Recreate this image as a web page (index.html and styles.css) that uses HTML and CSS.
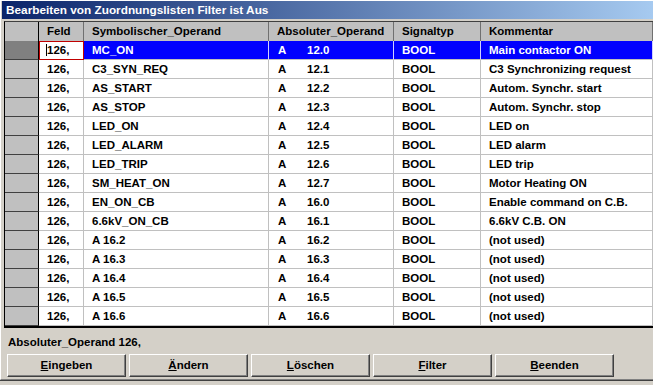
FILE: index.html
```html
<!DOCTYPE html>
<html>
<head>
<meta charset="utf-8">
<link rel="stylesheet" href="styles.css">
</head>
<body>
<div class="window">
  <div class="title">Bearbeiten von Zuordnungslisten Filter ist Aus</div>
  <div class="grid">
    <div class="row head">
      <div class="ind"></div>
      <div class="c">Feld</div>
      <div class="c">Symbolischer_Operand</div>
      <div class="c">Absoluter_Operand</div>
      <div class="c">Signaltyp</div>
      <div class="c">Kommentar</div>
    </div>
    <div class="row sel">
      <div class="ind"></div>
      <div class="c feld"><span class="caret"></span>126,</div>
      <div class="c">MC_ON</div>
      <div class="c"><span class="a">A</span>12.0</div>
      <div class="c">BOOL</div>
      <div class="c">Main contactor ON</div>
    </div>
    <div class="row"><div class="ind"></div><div class="c">126,</div><div class="c">C3_SYN_REQ</div><div class="c"><span class="a">A</span>12.1</div><div class="c">BOOL</div><div class="c">C3 Synchronizing request</div></div>
    <div class="row"><div class="ind"></div><div class="c">126,</div><div class="c">AS_START</div><div class="c"><span class="a">A</span>12.2</div><div class="c">BOOL</div><div class="c">Autom. Synchr. start</div></div>
    <div class="row"><div class="ind"></div><div class="c">126,</div><div class="c">AS_STOP</div><div class="c"><span class="a">A</span>12.3</div><div class="c">BOOL</div><div class="c">Autom. Synchr. stop</div></div>
    <div class="row"><div class="ind"></div><div class="c">126,</div><div class="c">LED_ON</div><div class="c"><span class="a">A</span>12.4</div><div class="c">BOOL</div><div class="c">LED on</div></div>
    <div class="row"><div class="ind"></div><div class="c">126,</div><div class="c">LED_ALARM</div><div class="c"><span class="a">A</span>12.5</div><div class="c">BOOL</div><div class="c">LED alarm</div></div>
    <div class="row"><div class="ind"></div><div class="c">126,</div><div class="c">LED_TRIP</div><div class="c"><span class="a">A</span>12.6</div><div class="c">BOOL</div><div class="c">LED trip</div></div>
    <div class="row"><div class="ind"></div><div class="c">126,</div><div class="c">SM_HEAT_ON</div><div class="c"><span class="a">A</span>12.7</div><div class="c">BOOL</div><div class="c">Motor Heating ON</div></div>
    <div class="row"><div class="ind"></div><div class="c">126,</div><div class="c">EN_ON_CB</div><div class="c"><span class="a">A</span>16.0</div><div class="c">BOOL</div><div class="c">Enable command on C.B.</div></div>
    <div class="row"><div class="ind"></div><div class="c">126,</div><div class="c">6.6kV_ON_CB</div><div class="c"><span class="a">A</span>16.1</div><div class="c">BOOL</div><div class="c">6.6kV C.B. ON</div></div>
    <div class="row"><div class="ind"></div><div class="c">126,</div><div class="c">A 16.2</div><div class="c"><span class="a">A</span>16.2</div><div class="c">BOOL</div><div class="c">(not used)</div></div>
    <div class="row"><div class="ind"></div><div class="c">126,</div><div class="c">A 16.3</div><div class="c"><span class="a">A</span>16.3</div><div class="c">BOOL</div><div class="c">(not used)</div></div>
    <div class="row"><div class="ind"></div><div class="c">126,</div><div class="c">A 16.4</div><div class="c"><span class="a">A</span>16.4</div><div class="c">BOOL</div><div class="c">(not used)</div></div>
    <div class="row"><div class="ind"></div><div class="c">126,</div><div class="c">A 16.5</div><div class="c"><span class="a">A</span>16.5</div><div class="c">BOOL</div><div class="c">(not used)</div></div>
    <div class="row"><div class="ind"></div><div class="c">126,</div><div class="c">A 16.6</div><div class="c"><span class="a">A</span>16.6</div><div class="c">BOOL</div><div class="c">(not used)</div></div>
  </div>
  <div class="status">Absoluter_Operand 126,</div>
  <div class="buttons">
    <div class="btn"><u>E</u>ingeben</div>
    <div class="btn"><u>Ä</u>ndern</div>
    <div class="btn"><u>L</u>öschen</div>
    <div class="btn"><u>F</u>ilter</div>
    <div class="btn"><u>B</u>eenden</div>
  </div>
</div>
</body>
</html>
```

FILE: styles.css
```css
html, body {
  margin: 0;
  padding: 0;
}
body {
  width: 653px;
  height: 385px;
  overflow: hidden;
  background: #d4d0c8;
  font: bold 11.5px "Liberation Sans", Arial, sans-serif;
  color: #000;
}
.window {
  box-sizing: border-box;
  height: 380px;
  border-left: 1px solid #fff;
  border-top: 1px solid #fff;
  border-bottom: 1px solid #808080;
  box-shadow: 0 1px 0 #404040;
}
.title {
  margin-left: 1px;
  height: 18px;
  line-height: 18px;
  padding-left: 4px;
  color: #fff;
  font-size: 11.8px;
  background: linear-gradient(to right, #0a246a, #a6caf0);
  white-space: nowrap;
}
.grid {
  margin: 2px 0 0 3px;
  border-left: 1px solid #000;
  border-top: 1px solid #404040;
  border-bottom: 2px solid #000;
  background: #fff;
}
.row {
  display: grid;
  grid-template-columns: 34px 45px 185px 125px 87px 1fr;
  height: 19px;
}
.c {
  box-sizing: border-box;
  padding-left: 8px;
  line-height: 18px;
  border-right: 1px solid #c0c0c0;
  border-bottom: 1px solid #c0c0c0;
  white-space: nowrap;
  overflow: hidden;
}
.ind {
  box-sizing: border-box;
  background: #c0c0c0;
  border-right: 1px solid #000;
  border-bottom: 1px solid #404040;
}
.head .c {
  background: #c0c0c0;
  border-right: 1px solid #707070;
  border-bottom: none;
  line-height: 19px;
}
.head .ind {
  border-bottom: none;
}
.sel .ind {
  background: #808080;
}
.sel .c {
  background: #0000ff;
  color: #fff;
  border-right-color: #d0d0ff;
}
.sel .feld {
  background: #fff;
  color: #000;
  padding-left: 7px;
  border-right: none;
  border-bottom: none;
  box-shadow: inset 0 0 0 1px #c00000;
}
.caret {
  display: inline-block;
  width: 0;
  height: 12px;
  border-left: 1px solid #000;
  vertical-align: -2px;
}
.a {
  display: inline-block;
  width: 29px;
  padding-left: 1px;
}
.status {
  padding: 7px 0 0 7px;
  line-height: 14px;
  height: 14px;
  white-space: nowrap;
}
.buttons {
  display: flex;
  gap: 3px;
  margin: 5px 0 0 6px;
}
.btn {
  box-sizing: border-box;
  width: 119px;
  height: 23px;
  line-height: 20px;
  text-align: center;
  background: #d4d0c8;
  border-top: 1px solid #fff;
  border-left: 1px solid #fff;
  border-right: 1px solid #404040;
  border-bottom: 1px solid #404040;
  box-shadow: inset -1px -1px 0 #808080;
}
```
